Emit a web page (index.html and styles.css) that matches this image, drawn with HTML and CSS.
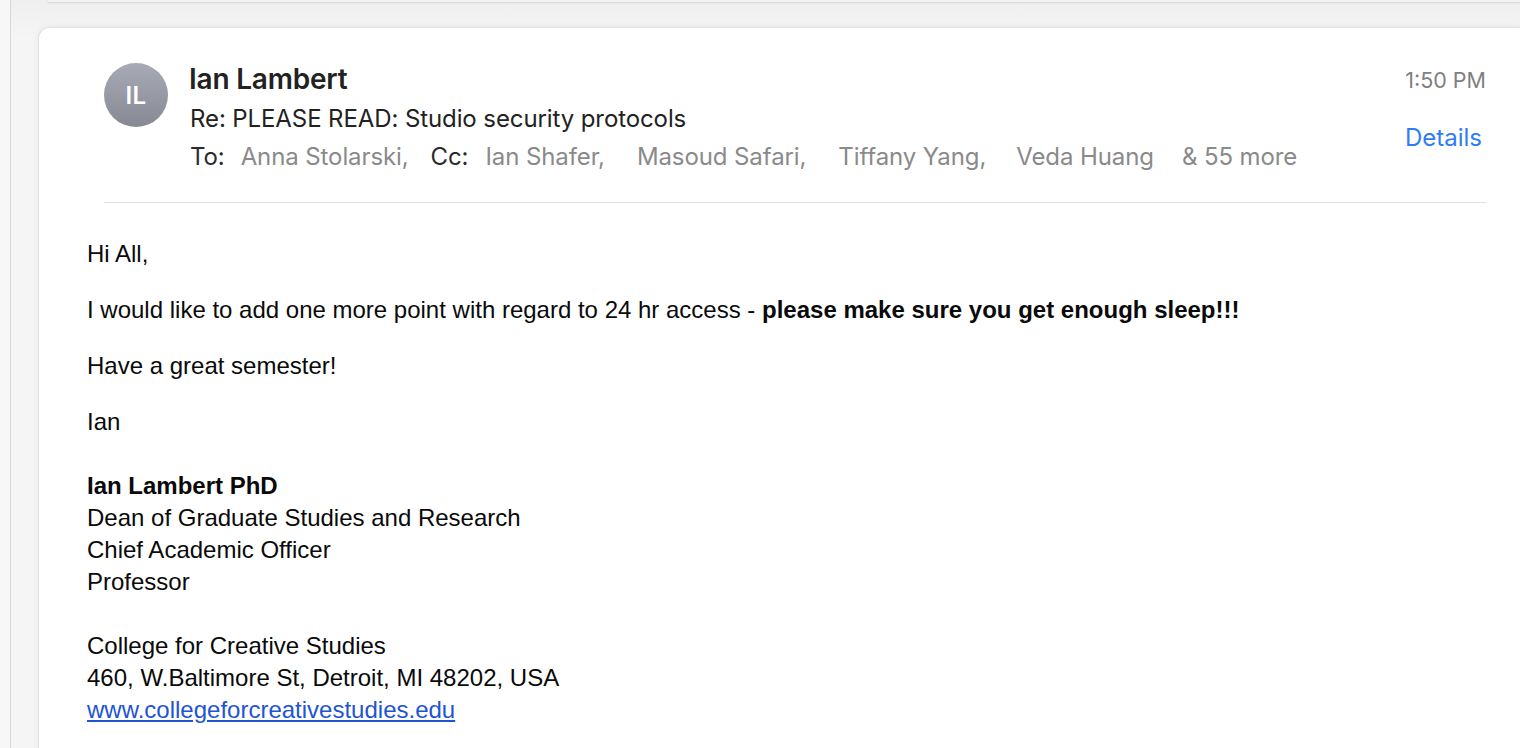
FILE: index.html
```html
<!DOCTYPE html>
<html lang="en">
<head>
<meta charset="utf-8">
<title>Re: PLEASE READ: Studio security protocols</title>
<link rel="stylesheet" href="styles.css">
</head>
<body>
<div class="app">
  <div class="rail"></div>
  <main class="main">
    <div class="prev-card"></div>
    <article class="card">
      <header class="msg-head">
        <div class="avatar">IL</div>
        <div class="meta">
          <div class="sender">Ian Lambert</div>
          <div class="subject">Re: PLEASE READ: Studio security protocols</div>
          <div class="recipients">
            <span class="label">To:</span>
            <span class="person p-anna">Anna Stolarski,</span>
            <span class="label l-cc">Cc:</span>
            <span class="person p-ian">Ian Shafer,</span>
            <span class="person p-far">Masoud Safari,</span>
            <span class="person p-far">Tiffany Yang,</span>
            <span class="person p-veda">Veda Huang</span>
            <span class="person p-more">&amp; 55 more</span>
          </div>
        </div>
        <div class="side">
          <div class="time">1:50 PM</div>
          <div class="details">Details</div>
        </div>
      </header>
      <section class="msg-body">
        <p>Hi All,</p>
        <p>I would like to add one more point with regard to 24 hr access - <strong>please make sure you get enough sleep!!!</strong></p>
        <p>Have a great semester!</p>
        <p class="signoff">Ian</p>
        <div class="sig">
          <div class="sig-name">Ian Lambert PhD</div>
          <div>Dean of Graduate Studies and Research</div>
          <div>Chief Academic Officer</div>
          <div>Professor</div>
        </div>
        <div class="sig addr">
          <div>College for Creative Studies</div>
          <div>460, W.Baltimore St, Detroit, MI 48202, USA</div>
          <div><a class="link" href="#">www.collegeforcreativestudies.edu</a></div>
        </div>
      </section>
    </article>
  </main>
</div>
</body>
</html>
```
FILE: styles.css
```css
* { box-sizing: border-box; }
html, body { margin: 0; padding: 0; height: 100%; }
body {
  background: #f4f4f4;
  font-family: Inter, "Noto Sans", "Liberation Sans", sans-serif;
  overflow: hidden;
}
.app {
  display: flex;
  height: 748px;
  overflow: hidden;
}
.rail {
  width: 11px;
  flex: none;
  background: #f7f7f7;
  border-right: 1px solid #d8d8d8;
}
.main {
  flex: 1;
  padding-left: 27px;
  background: linear-gradient(#efefef, #f5f5f5 40px);
  overflow: hidden;
}
.prev-card {
  height: 3px;
  margin-left: 9px;
  background: #f2f2f2;
  border-bottom: 1px solid #dcdcdc;
  border-radius: 0 0 0 10px;
  box-shadow: 0 1px 3px rgba(0,0,0,0.05);
}
.card {
  margin-top: 24px;
  background: #fff;
  border: 1px solid #e2e2e2;
  border-right: none;
  border-bottom: none;
  border-radius: 12px 0 0 0;
  box-shadow: 0 0 6px rgba(0,0,0,0.06);
  height: 800px;
}
.msg-head {
  display: flex;
  align-items: flex-start;
  margin: 0 34px 0 65px;
  padding-top: 35px;
  padding-bottom: 30px;
  border-bottom: 1px solid #e0e0e0;
}
.avatar {
  width: 64px;
  height: 64px;
  flex: none;
  border-radius: 50%;
  background: linear-gradient(#a8abb5, #868993);
  color: #fff;
  font-weight: 600;
  font-size: 24px;
  display: flex;
  align-items: center;
  justify-content: center;
  letter-spacing: 0.5px;
}
.meta {
  flex: 1;
  margin-left: 21px;
  color: #222;
}
.sender {
  font-size: 28px;
  font-weight: 600;
  line-height: 32px;
  letter-spacing: -0.2px;
}
.subject {
  font-size: 24px;
  line-height: 30px;
  margin-top: 9px;
  margin-left: 1px;
  letter-spacing: -0.1px;
}
.recipients {
  display: flex;
  font-size: 24px;
  line-height: 30px;
  margin-top: 8px;
  margin-left: 1px;
  white-space: nowrap;
  letter-spacing: -0.1px;
}
.label { color: #2b2b2b; }
.person { color: #8a8a8a; }
.p-anna { margin-left: 16px; }
.l-cc { margin-left: 22px; }
.p-ian { margin-left: 17px; }
.p-far { margin-left: 32px; }
.p-veda { margin-left: 30px; }
.p-more { margin-left: 28px; }
.side {
  display: flex;
  flex-direction: column;
  align-items: flex-end;
}
.time {
  font-size: 21.5px;
  line-height: 28px;
  color: #7f7f7f;
  margin-top: 3px;
}
.details {
  font-size: 24px;
  line-height: 30px;
  color: #2f7cf6;
  margin-top: 29px;
  margin-right: 4px;
}
.msg-body {
  padding: 35px 0 0 48px;
  font-family: "Liberation Sans", Arial, sans-serif;
  font-size: 24px;
  line-height: 32px;
  color: #0a0a0a;
}
.msg-body p { margin: 0 0 24px; }
.msg-body p.signoff { margin-bottom: 32px; }
.sig-name { font-weight: 700; }
.addr { margin-top: 32px; }
.link {
  color: #1f54d3;
  text-decoration: underline;
}
```
